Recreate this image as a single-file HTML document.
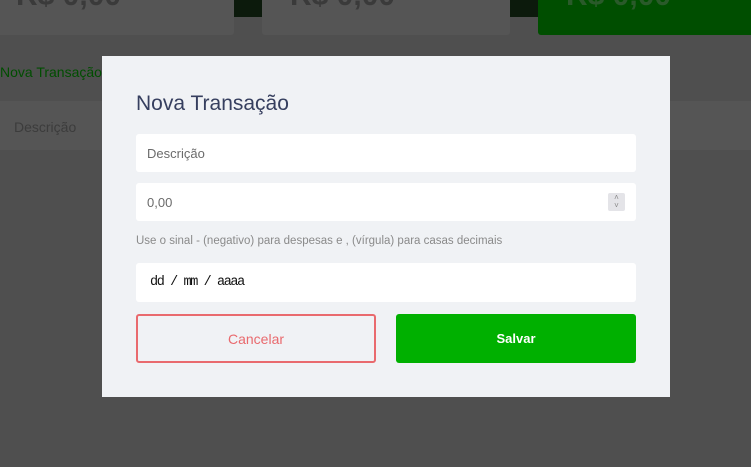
<!DOCTYPE html>
<html><head><meta charset="utf-8"><style>
*{margin:0;padding:0;box-sizing:border-box}
body{width:751px;height:467px;overflow:hidden;background:#4f4f4f;font-family:"Liberation Sans",sans-serif;position:relative}
.abs{position:absolute}
.card{background:#555;border-radius:3px;overflow:hidden}
.rs{position:absolute;left:28px;top:-16px;color:#3a3a3a;font-size:30px;font-weight:bold}
.inp{position:absolute;left:136px;width:500px;background:#fff;border-radius:3px;font-size:13px;color:#6b6b6b;padding-left:11px;display:flex;align-items:center}
</style></head><body>
<div class="abs card" style="left:-5px;top:-5px;width:239px;height:40px"><div class="rs" style="left:21px">R$ 0,00</div></div>
<div class="abs" style="left:234px;top:0;width:28px;height:17px;background:#0c1a0c"></div>
<div class="abs card" style="left:262px;top:-5px;width:248px;height:40px"><div class="rs">R$ 0,00</div></div>
<div class="abs" style="left:510px;top:0;width:28px;height:17px;background:#0c1a0c"></div>
<div class="abs card" style="left:538px;top:-5px;width:220px;height:40px;background:#004e00"><div class="rs" style="color:#2a5a2a">R$ 0,00</div></div>
<div class="abs" style="left:0;top:64px;font-size:14px;color:#004e00">Nova Transação</div>
<div class="abs" style="left:0;top:101px;width:751px;height:49px;background:#555"></div>
<div class="abs" style="left:14px;top:119px;font-size:14px;color:#3c3c3c">Descrição</div>

<div class="abs" style="left:102px;top:56px;width:568px;height:341px;background:#f0f2f5"></div>
<div class="abs" style="left:136px;top:92px;font-size:21px;color:#363f5f">Nova Transação</div>
<div class="inp" style="top:134px;height:38px">Descrição</div>
<div class="inp" style="top:183px;height:38px">0,00
<div style="position:absolute;right:11px;top:10px;width:17px;height:18px;background:#e4e4e8;border-radius:2px;font-size:8px;line-height:8px;text-align:center;color:#888;padding-top:1px">˄<br>˅</div></div>
<div class="abs" style="left:136px;top:235px;font-size:11.5px;color:#8a8a8a">Use o sinal - (negativo) para despesas e , (vírgula) para casas decimais</div>
<div class="inp" style="top:263px;height:39px;color:#111;font-family:'Liberation Mono',monospace;font-size:13.5px;letter-spacing:-1.4px;padding-left:14px">dd / mm / aaaa</div>
<div class="abs" style="left:136px;top:314px;width:240px;height:49px;border:2px solid #e96a6e;border-radius:3px;color:#e96a6e;font-size:14px;display:flex;align-items:center;justify-content:center">Cancelar</div>
<div class="abs" style="left:396px;top:314px;width:240px;height:49px;background:#00b000;border-radius:3px;color:#fff;font-size:13px;font-weight:bold;display:flex;align-items:center;justify-content:center">Salvar</div>
</body></html>
